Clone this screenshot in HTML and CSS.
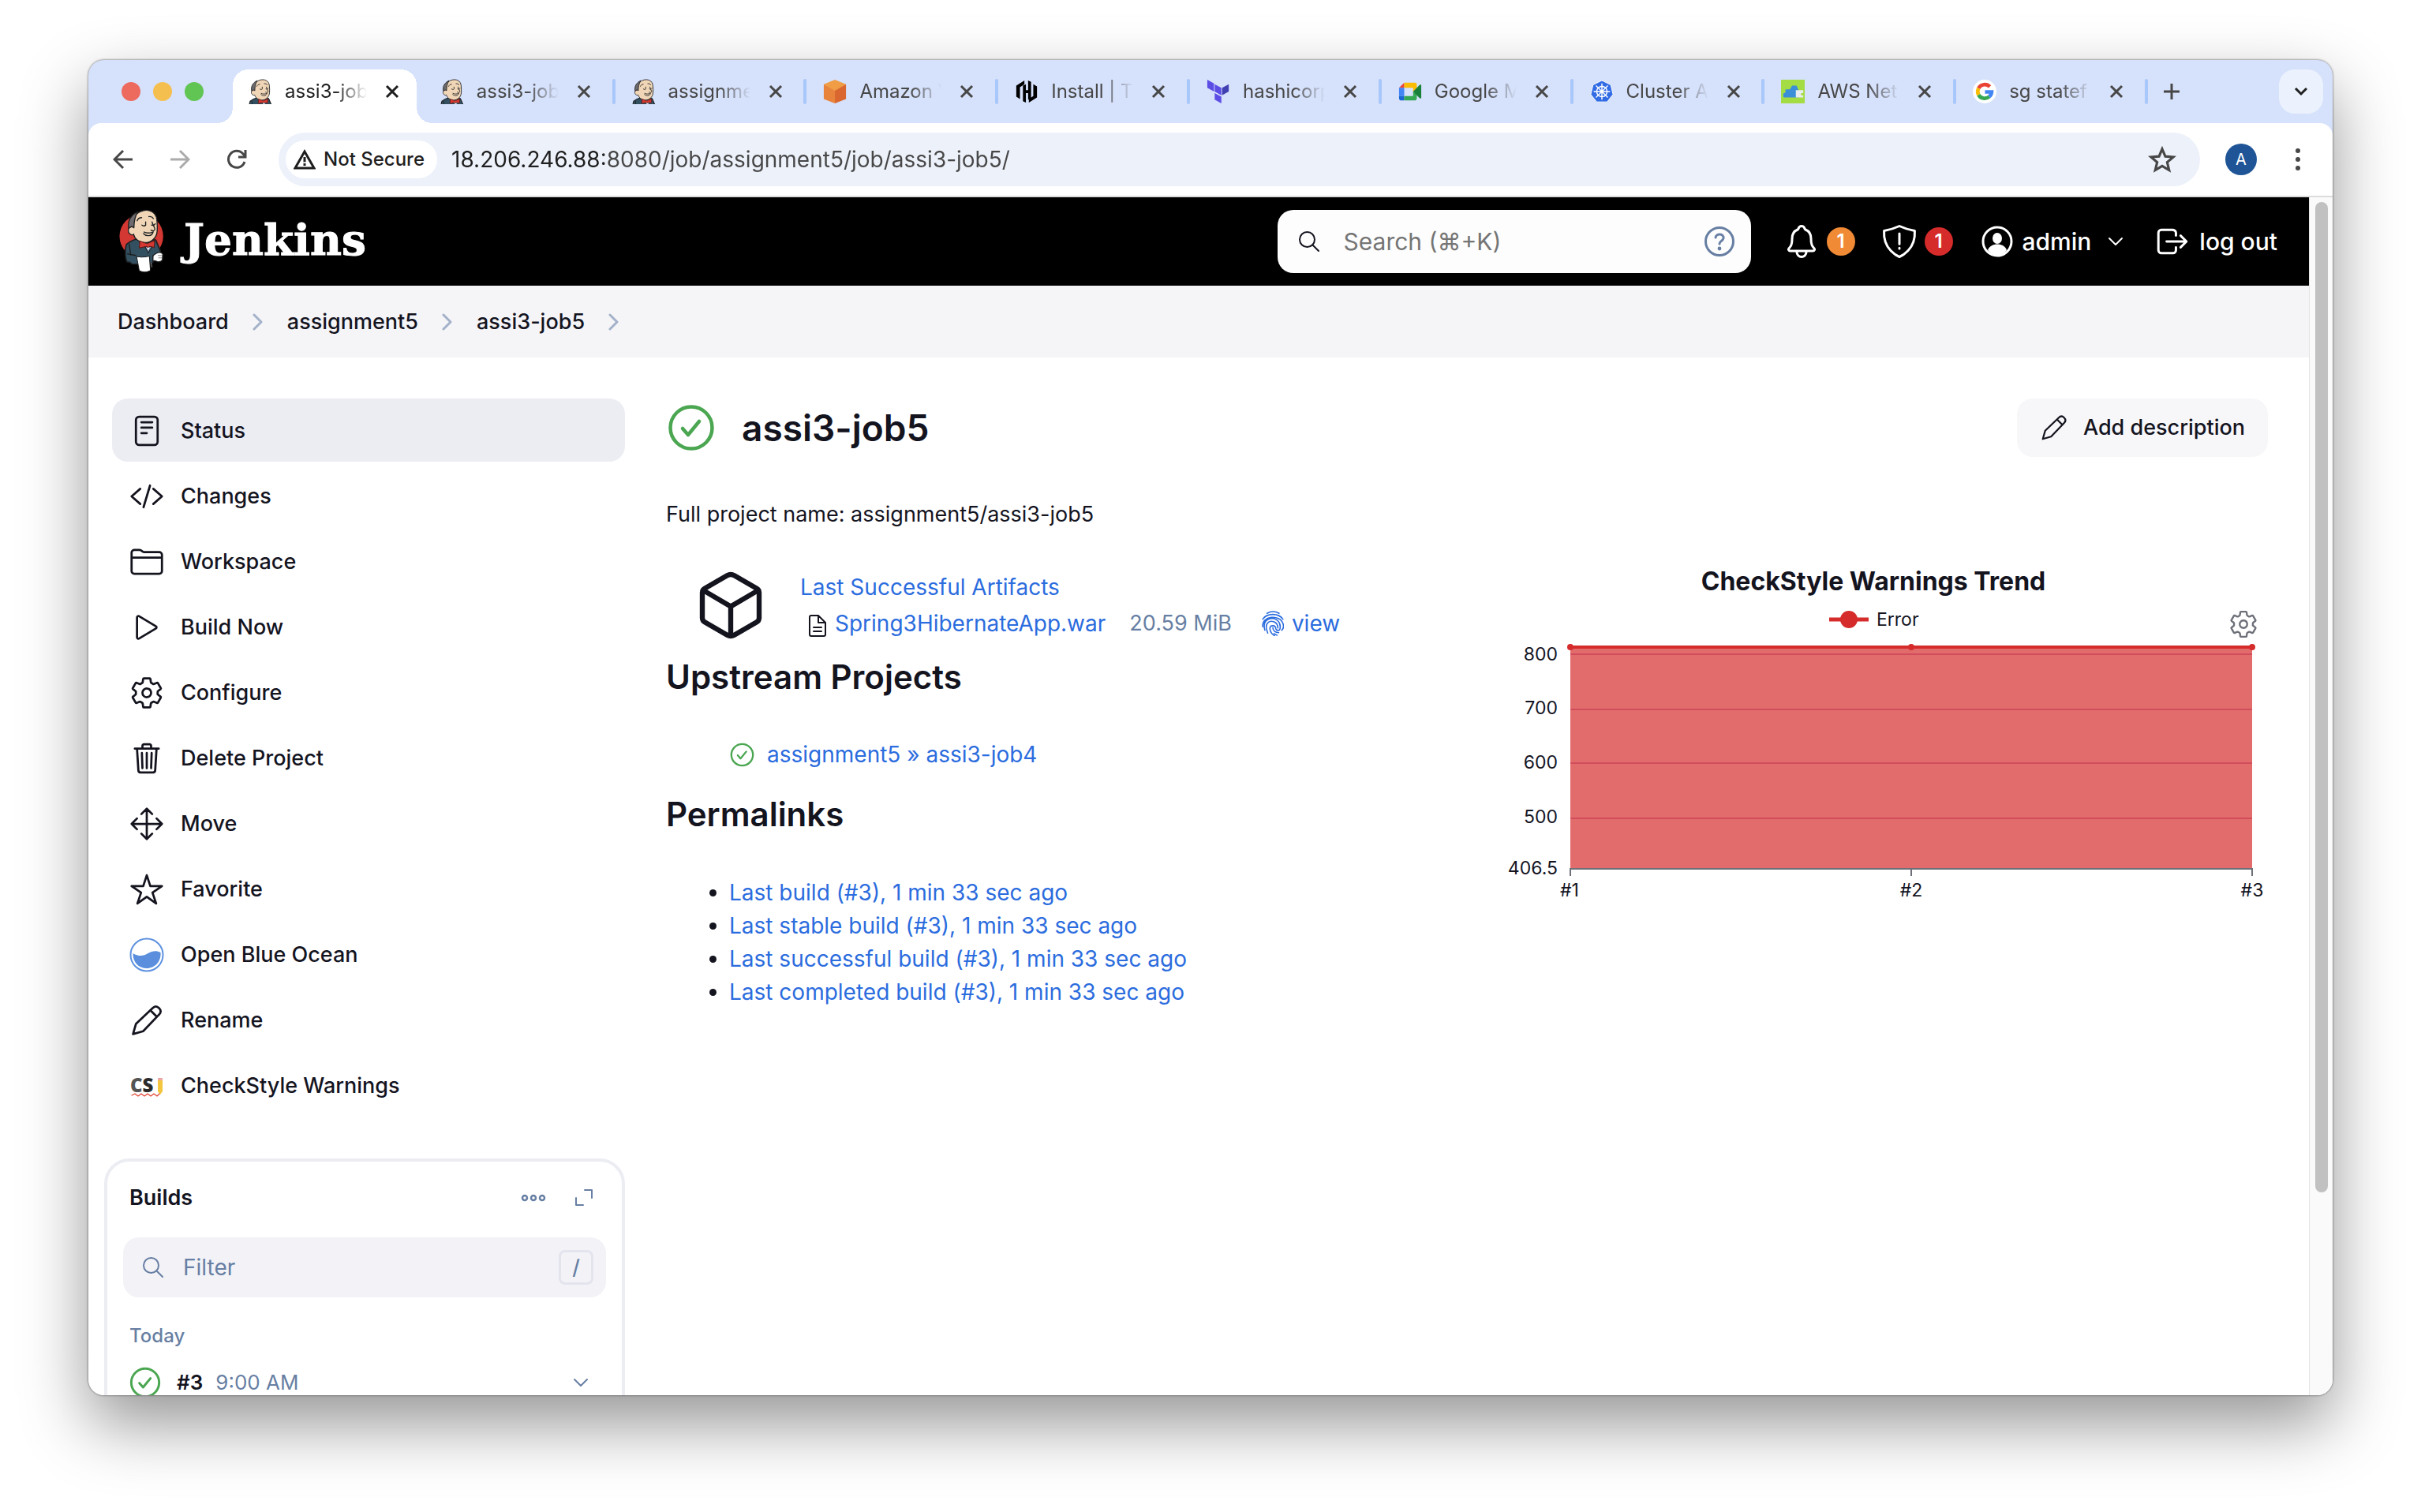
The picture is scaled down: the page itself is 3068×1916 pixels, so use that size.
FILE: index.html
```html
<!DOCTYPE html>
<html lang="en">
<head>
<meta charset="utf-8">
<title>assi3-job5 [Jenkins]</title>
<link rel="stylesheet" href="styles.css">
</head>
<body>
<svg class="defs" aria-hidden="true">
  <symbol id="butler" viewBox="0 0 200 270">
    <path d="M42 150c14-12 28-18 44-21l66 5 18 42-14 20-14-3v24l-14 8-66-1-6-6-12-2c-6-10-10-44-2-66z" fill="#335061" stroke="#1d1f20" stroke-width="5" stroke-linejoin="round"/>
    <path d="M104 144l20 38 22-38z" fill="#83a3bd" stroke="#1d1f20" stroke-width="3"/>
    <path d="M112 150l12 22 8-22z" fill="#fff"/>
    <path d="M62 84c-16-2-18 24-2 30 6 2 8 0 9-1 4 18 22 30 42 31 24 0 44-18 46-42 2-16 0-30-1-46-3-28-30-38-52-32-28 6-42 30-42 60z" fill="#f0d6b7" stroke="#1d1f20" stroke-width="4"/>
    <path d="M84 28c-22 10-40 32-33 62l10-7 9 5c0-22 2-38 14-60z" fill="#6d6b6d" stroke="#1d1f20" stroke-width="4" stroke-linejoin="round"/>
    <path d="M82 62c3-8 9-12 17-12M126 46c8-1 14 2 17 7M100 78c6 4 11 4 14 0v-12M136 78c5 2 10 1 14-5M138 66c2 12 14 24 10 30-3 4-9 4-14 1M108 104c10 6 22 4 34 0-4 18-28 16-36 6" fill="none" stroke="#1d1f20" stroke-width="4" stroke-linecap="round"/>
    <path d="M120 148l-28-10-2 26 28-6 4 4 8-4 16 4 2-26-22 9z" fill="#d33833" stroke="#5a1512" stroke-width="3" stroke-linejoin="round"/>
    <path d="M80 196c16 3 32 2 48-2l4 54c-12 8-30 8-42 1z" fill="#fff" stroke="#1d1f20" stroke-width="3"/>
    <path d="M142 192l12-8c10-6 20-4 24 3l-1 22c-6 8-18 9-24 4l-12-2z" fill="#fff" stroke="#1d1f20" stroke-width="4"/>
    <path d="M160 192h14M162 201h13M134 218l4 18" stroke="#8b8b8b" stroke-width="3"/>
    <path d="M44 186l34 6M52 148l6 44" stroke="#1d1f20" stroke-width="4"/>
  </symbol>
  <symbol id="x" viewBox="0 0 18 18"><path d="M2 2l14 14M16 2L2 16" stroke="currentColor" stroke-width="3" fill="none"/></symbol>
  <symbol id="down" viewBox="0 0 20 12"><path d="M2 2l8 8 8-8" stroke="currentColor" stroke-width="2" fill="none" stroke-linecap="round" stroke-linejoin="round"/></symbol>
  <symbol id="right" viewBox="0 0 14 24"><path d="M2 3l9 9-9 9" stroke="currentColor" stroke-width="3" fill="none" stroke-linecap="round" stroke-linejoin="round"/></symbol>
  <symbol id="ok" viewBox="0 0 60 60"><g fill="none" stroke="#4ba651" stroke-linecap="round" stroke-linejoin="round"><circle cx="30" cy="30" r="26.500" stroke-width="4.500"/><path d="M19 31l7 8 14-17" stroke-width="4.500"/></g></symbol>
  <symbol id="search" viewBox="0 0 28 28"><path d="M26 26l-8-8M21 11.500a9.500 9.500 0 1 1-19 0 9.500 9.500 0 0 1 19 0z" stroke="currentColor" stroke-width="2" fill="none" stroke-linecap="round"/></symbol>
  <symbol id="pencil" viewBox="0 0 48 48"><path d="M5 43l4-14L32 7c3-3 6-3 9 0s3 6 0 9L19 39zM29 10l9 9" stroke="currentColor" stroke-width="3" fill="none" stroke-linecap="round" stroke-linejoin="round"/></symbol>
  <symbol id="gear" viewBox="0 0 512 512"><path fill="none" stroke="currentColor" stroke-width="32" stroke-linejoin="round" d="M262.290 192.310a64 64 0 1057.400 57.400 64.130 64.130 0 00-57.400-57.400zM416.390 256a154.340 154.340 0 01-1.530 20.790l45.210 35.460a10.810 10.810 0 012.450 13.750l-42.770 74a10.810 10.810 0 01-13.140 4.590l-44.900-18.080a16.110 16.110 0 00-15.170 1.750A164.480 164.480 0 01325 400.800a15.940 15.940 0 00-8.820 12.140l-6.730 47.890a11.080 11.080 0 01-10.680 9.170h-85.540a11.110 11.110 0 01-10.690-8.870l-6.720-47.820a16.070 16.070 0 00-9-12.220 155.300 155.300 0 01-21.460-12.570 16 16 0 00-15.110-1.710l-44.890 18.070a10.810 10.810 0 01-13.140-4.580l-42.770-74a10.800 10.800 0 012.450-13.750l38.210-30a16.050 16.050 0 006-14.080c-.360-4.170-.580-8.330-.580-12.500s.210-8.270.580-12.350a16 16 0 00-6.070-13.940l-38.190-30A10.810 10.810 0 0149.480 186l42.770-74a10.810 10.810 0 0113.140-4.590l44.900 18.080a16.110 16.110 0 0015.170-1.750A164.480 164.480 0 01187 111.200a15.940 15.940 0 008.820-12.140l6.730-47.890A11.080 11.080 0 01213.230 42h85.540a11.110 11.110 0 0110.690 8.870l6.720 47.820a16.070 16.070 0 009 12.220 155.300 155.300 0 0121.460 12.570 16 16 0 0015.110 1.710l44.890-18.070a10.810 10.810 0 0113.140 4.580l42.770 74a10.800 10.800 0 01-2.450 13.750l-38.210 30a16.050 16.050 0 00-6.050 14.080c.330 4.140.550 8.300.550 12.470z"/></symbol>
</svg>

<div class="window">
  <div class="tabstrip">
    <div class="lights"><span class="light red"></span><span class="light amber"></span><span class="light green"></span></div>
    <div class="tabs">
      <div class="tab active"><svg class="fav" viewBox="33 18 140 150"><use href="#butler" width="200" height="270"/></svg><a href="#">assi3-job</a><button aria-label="Close tab"><svg><use href="#x"/></svg></button></div>
      <div class="tab"><svg class="fav" viewBox="33 18 140 150"><use href="#butler" width="200" height="270"/></svg><a href="#">assi3-job</a><button aria-label="Close tab"><svg><use href="#x"/></svg></button></div>
      <div class="tab"><svg class="fav" viewBox="33 18 140 150"><use href="#butler" width="200" height="270"/></svg><a href="#">assignme</a><button aria-label="Close tab"><svg><use href="#x"/></svg></button></div>
      <div class="tab"><svg class="fav" viewBox="0 0 32 32"><path d="M16 0l15 6-15 10L1 6z" fill="#f09d45"/><path d="M1 6l15 9v17L1 26z" fill="#e8833c"/><path d="M31 6l-15 9v17l15-6z" fill="#d9672f"/></svg><a href="#">Amazon V</a><button aria-label="Close tab"><svg><use href="#x"/></svg></button></div>
      <div class="tab"><svg class="fav" viewBox="0 0 32 32"><path d="M13 1v5L7 10v16l-5-3V8zM19 31v-5l6-4V6l5 3v15zM11 8l4-2v8h3V1l4 2v22l-4 2v-9h-3v13l-4-2z" fill="#000"/></svg><a href="#">Install | T</a><button aria-label="Close tab"><svg><use href="#x"/></svg></button></div>
      <div class="tab"><svg class="fav" viewBox="0 0 32 32"><path d="M1 0l9 5v11l-9-5zM11 6l9 5v10l-9-5zM11 18l9 5v9l-9-5z" fill="#5c4ee5"/><path d="M21 11l9-5v10l-9 5z" fill="#4040b2"/></svg><a href="#">hashicorp</a><button aria-label="Close tab"><svg><use href="#x"/></svg></button></div>
      <div class="tab"><svg class="fav" viewBox="0 0 32 32"><path d="M1 11h7V4z" fill="#ea4335"/><path d="M8 4h14a3 3 0 0 1 3 3v5l-5 4v-5H8z" fill="#fbbc04"/><path d="M1 11h7v11H1z" fill="#4285f4"/><path d="M1 22h7v6H4a3 3 0 0 1-3-3z" fill="#1967d2"/><path d="M8 22h12v-6l5 4v5a3 3 0 0 1-3 3H8z" fill="#34a853"/><path d="M20 16l9-9q2-1 2 1v16q0 2-2 1z" fill="#188038"/></svg><a href="#">Google M</a><button aria-label="Close tab"><svg><use href="#x"/></svg></button></div>
      <div class="tab"><svg class="fav" viewBox="0 0 32 32"><path d="M16 1l12 6 3 13-8 10H9L1 20 4 7z" fill="#326ce5" stroke="#fff" stroke-width="1"/><g fill="none" stroke="#fff" stroke-width="1.500"><circle cx="16" cy="16" r="7"/><path d="M16 5v22M5 16h22M8 8l16 16M24 8L8 24"/></g><circle cx="16" cy="16" r="2" fill="#fff"/></svg><a href="#">Cluster A</a><button aria-label="Close tab"><svg><use href="#x"/></svg></button></div>
      <div class="tab"><svg class="fav" viewBox="0 0 32 32"><path d="M0 0h32v32H0z" fill="#a4dc43"/><path d="M3 23v-4l3-2v-4h6l3-5h6l3 7v9H4z" fill="#3b8ed8"/><path d="M20 14h10v4h-3v3h3v3H20z" fill="#e8ecee"/></svg><a href="#">AWS Net</a><button aria-label="Close tab"><svg><use href="#x"/></svg></button></div>
      <div class="tab"><svg class="fav" viewBox="0 0 32 32"><circle cx="16" cy="16" r="16" fill="#fff"/><g fill="none" stroke-width="5"><path d="M23 9.500A9.500 9.500 0 0 0 7.800 11.500" stroke="#ea4335"/><path d="M7.800 11.500a9.500 9.500 0 0 0 0 9" stroke="#fbbc05"/><path d="M7.800 20.500A9.500 9.500 0 0 0 22.200 23" stroke="#34a853"/><path d="M16.500 16.500h9a9.500 9.500 0 0 1-3.300 6.500" stroke="#4285f4"/></g></svg><a href="#">sg statef</a><button aria-label="Close tab"><svg><use href="#x"/></svg></button></div>
    </div>
    <button class="newtab" aria-label="New tab"><svg viewBox="0 0 22 22"><path d="M11 1v20M1 11h20" stroke="currentColor" stroke-width="3"/></svg></button>
    <button class="tablist" aria-label="Search tabs"><svg viewBox="0 0 20 12"><path d="M3 2l7 7 7-7" stroke="currentColor" stroke-width="3" fill="none"/></svg></button>
  </div>

  <div class="toolbar">
    <button class="nav" aria-label="Back"><svg viewBox="0 0 26 26"><path d="M25 13H3M13 2L2 13l11 11" stroke="currentColor" stroke-width="3" fill="none"/></svg></button>
    <button class="nav off" aria-label="Forward"><svg viewBox="0 0 26 26"><path d="M1 13h22M13 2l11 11-11 11" stroke="currentColor" stroke-width="3" fill="none"/></svg></button>
    <button class="nav" aria-label="Reload"><svg viewBox="0 0 26 26"><path d="M23 16A10.500 10.500 0 1 1 21 6l3 3M24 1v9h-9" stroke="currentColor" stroke-width="3" fill="none"/></svg></button>
    <div class="omnibox">
      <button class="chip"><svg viewBox="0 0 28 26"><path d="M14 3L2 24h24z" stroke="currentColor" stroke-width="3" fill="none"/><path d="M14 10v7M14 18v3" stroke="currentColor" stroke-width="3"/><path d="M12.500 17h3" stroke="#fff" stroke-width="1.500"/></svg>Not Secure</button>
      <input class="url" type="text" aria-label="Address" value="18.206.246.88:8080/job/assignment5/job/assi3-job5/">
      <button class="fave" aria-label="Bookmark"><svg viewBox="0 0 30 30"><path d="M15 4l3.300 7.800 8.500.700-6.500 5.500 2 8.300L15 22l-7.300 4.300 2-8.300-6.500-5.500 8.500-.700z" stroke="currentColor" stroke-width="2.600" fill="none"/></svg></button>
    </div>
    <button class="avatar">A</button>
    <button class="kebab" aria-label="Menu"><svg viewBox="0 0 6 30"><circle cx="3" cy="4" r="3"/><circle cx="3" cy="15" r="3"/><circle cx="3" cy="26" r="3"/></svg></button>
  </div>

  <div class="viewport">
    <div class="page">
      <header class="top">
        <a class="brand" href="#"><svg viewBox="12 18 174 243"><circle cx="98" cy="120" r="82" fill="#d33833"/><use href="#butler" width="200" height="270"/></svg>Jenkins</a>
        <div class="find">
          <svg class="glass"><use href="#search"/></svg>
          <input type="search" aria-label="Search" placeholder="Search (⌘+K)">
          <a href="#" aria-label="Help"><svg viewBox="0 0 40 40"><g fill="none" stroke="currentColor" stroke-width="3" stroke-linecap="round" stroke-linejoin="round"><circle cx="20" cy="20" r="17.500"/><path d="M15 15c1-6 11-5 10 1-1 4-5 3-5 7"/></g><circle cx="20" cy="29" r="2.400" fill="currentColor"/></svg></a>
        </div>
        <a class="alert" href="#"><svg class="line" viewBox="0 0 512 512"><path d="M427.680 351.430C402 320 383.870 304 383.870 217.350 383.870 138 343.350 109.730 310 96c-4.430-1.820-8.600-6-9.950-10.550C294.200 65.540 277.800 48 256 48s-38.210 17.550-44 37.470c-1.350 4.600-5.520 8.710-9.950 10.530-33.390 13.750-73.870 41.920-73.870 121.350C128.130 304 110 320 84.320 351.430 73.680 364.450 83 384 101.610 384h308.880c18.510 0 27.770-19.610 17.190-32.570zM320 384v16a64 64 0 01-128 0v-16"/></svg><span class="badge warn">1</span></a>
        <a class="alert" href="#"><svg class="line" viewBox="0 0 512 512"><path d="M463.100 112.370C373.680 96.330 336.710 84.450 256 48c-80.710 36.450-117.680 48.330-207.100 64.370C32.700 369.130 240.580 457.790 256 464c15.420-6.210 223.300-94.870 207.100-351.630zM256 150v140M256 345v6"/></svg><span class="badge bad">1</span></a>
        <a class="user" href="#"><svg viewBox="0 0 40 40"><circle cx="20" cy="20" r="18" fill="none" stroke="#fff" stroke-width="3"/><ellipse cx="20" cy="16" rx="6" ry="7" fill="#fff"/><path d="M8 31c3-10 21-10 24 0-6 9-18 9-24 0z" fill="#fff"/></svg>admin<svg class="caret"><use href="#down"/></svg></a>
        <a class="logout" href="#"><svg class="line" viewBox="40 76 432 360"><path d="M304 336v40a40 40 0 01-40 40H104a40 40 0 01-40-40V136a40 40 0 0140-40h152c22.090 0 48 17.910 48 40v40M368 336l80-80-80-80M176 256h256"/></svg>log out</a>
      </header>
      <nav class="crumbs" aria-label="Breadcrumb">
        <a href="#">Dashboard</a><svg><use href="#right"/></svg><a href="#">assignment5</a><svg><use href="#right"/></svg><a href="#">assi3-job5</a><svg><use href="#right"/></svg>
      </nav>

      <div class="content">
        <aside class="side">
          <nav class="tasks">
            <a class="current" href="#"><svg viewBox="0 0 512 512"><rect x="96" y="48" width="320" height="416" rx="48"/><path d="M176 128h160M176 208h160M176 288h80"/></svg>Status</a>
            <a href="#"><svg viewBox="0 0 512 512"><path d="M160 368L32 256l128-112M352 368l128-112-128-112M304 96l-96 320"/></svg>Changes</a>
            <a href="#"><svg viewBox="0 0 512 512"><path d="M440 432H72a40 40 0 01-40-40V120a40 40 0 0140-40h75.890a40 40 0 0122.190 6.720l27.840 18.560a40 40 0 0022.190 6.720H440a40 40 0 0140 40v240a40 40 0 01-40 40zM32 192h448"/></svg>Workspace</a>
            <a href="#"><svg viewBox="0 0 512 512"><path d="M112 111v290c0 17.440 17 28.520 31 20.160l247.900-148.370c12.120-7.250 12.120-26.330 0-33.580L143 90.840c-14-8.360-31 2.720-31 20.160z"/></svg>Build Now</a>
            <a href="#"><svg><use href="#gear"/></svg>Configure</a>
            <a href="#"><svg viewBox="0 0 512 512"><path d="M112 112l20 320c.950 18.490 14.400 32 32 32h184c17.670 0 30.870-13.510 32-32l20-320M80 112h352M192 112V72a23.930 23.930 0 0124-24h80a23.930 23.930 0 0124 24v40M256 176v224M184 176l8 224M328 176l-8 224"/></svg>Delete Project</a>
            <a href="#"><svg viewBox="0 0 512 512"><path d="M176 112l80-80 80 80M256 32v448M176 400l80 80 80-80M400 176l80 80-80 80M112 176l-80 80 80 80M32 256h448"/></svg>Move</a>
            <a href="#"><svg viewBox="0 0 512 512"><path d="M480 208H308L256 48l-52 160H32l140 96-54 160 138-100 138 100-54-160z"/></svg>Favorite</a>
            <a href="#"><svg viewBox="0 0 44 44"><circle cx="22" cy="22" r="20.500" fill="#fff" stroke="#5e92e0" stroke-width="2"/><path d="M4.500 20c8 5 14 3 19 0s11-4 16-1c1 11-7 20-17.500 20S4 31 4.500 20z" fill="#5b8fde"/></svg>Open Blue Ocean</a>
            <a href="#"><svg><use href="#pencil"/></svg>Rename</a>
            <a href="#"><svg viewBox="0 0 44 44"><text x="1" y="30" class="csi" fill="#555">C<tspan fill="#2b2b2b">S</tspan></text><path d="M36 15h6v14l-3 4-3-4z" fill="#f3c63d"/><path d="M36 12h6v3h-6z" fill="#efa6a6"/><path d="M3 34l4-2 4 3 4-3 4 3 4-3 4 3 4-3 4 3 3-3" fill="none" stroke="#e0412f" stroke-width="1.200"/></svg>CheckStyle Warnings</a>
          </nav>
          <section class="builds">
            <div class="bhead"><h2>Builds</h2><button aria-label="More"><svg viewBox="0 0 32 12" class="dots"><g fill="none" stroke="currentColor" stroke-width="2.500"><circle cx="5" cy="6" r="3"/><circle cx="16" cy="6" r="3"/><circle cx="27" cy="6" r="3"/></g></svg></button><button aria-label="Expand"><svg viewBox="0 0 24 24" class="expand"><path d="M13 2h9v10M2 12v9h9" fill="none" stroke="currentColor" stroke-width="2" stroke-linecap="round" stroke-linejoin="round"/></svg></button></div>
            <label class="filter"><svg><use href="#search"/></svg><input type="text" placeholder="Filter" aria-label="Filter builds"><kbd>/</kbd></label>
            <h3>Today</h3>
            <a class="build" href="#"><svg class="state"><use href="#ok"/></svg><b>#3</b><span>9:00 AM</span><svg class="caret"><use href="#down"/></svg></a>
          </section>
        </aside>

        <main class="main">
          <div class="title">
            <svg><use href="#ok"/></svg><h1>assi3-job5</h1>
            <button class="describe"><svg><use href="#pencil"/></svg>Add description</button>
          </div>
          <div class="body">
            <div class="info">
              <p>Full project name: assignment5/assi3-job5</p>
              <div class="artifacts">
                <svg class="cube" viewBox="0 0 512 512"><path d="M448 341.370V170.610A32 32 0 00432.110 143l-152-88.460a47.940 47.940 0 00-48.240 0L79.890 143A32 32 0 0064 170.610v170.760A32 32 0 0079.890 369l152 88.460a48 48 0 0048.240 0l152-88.460A32 32 0 00448 341.370zM69 154l187 110 187-110M256 464V264"/></svg>
                <div>
                  <a href="#">Last Successful Artifacts</a>
                  <div class="file">
                    <svg class="doc" viewBox="0 0 24 30"><path d="M4 2h9l9 9v15a2 2 0 0 1-2 2H4a2 2 0 0 1-2-2V4a2 2 0 0 1 2-2zM13 2v9h9M7 17h10M7 22h10"/></svg>
                    <a href="#">Spring3HibernateApp.war</a><span class="size">20.59 MiB</span>
                    <a class="print" href="#"><svg viewBox="0 0 52 60"><path d="M12 6c9-5 20-5 29 0M2 20C12 5 40 5 50 20M2 38C-1 11 43 8 50 30c2 6 1 13-3 16M7 46c-8-28 20-34 31-22 6 6 6 14 5 19-1 5-9 5-10-1-1-9-14-9-14 1 1 8 5 13 11 16M14 53C4 30 17 22 28 26c8 3 10 9 10 15M26 40c0 8 7 12 14 12M36 58c-3-1-5-2-7-4"/></svg>view</a>
                  </div>
                </div>
              </div>
              <h2>Upstream Projects</h2>
              <ul class="upstream"><li><svg><use href="#ok"/></svg><a href="#">assignment5 » assi3-job4</a></li></ul>
              <h2>Permalinks</h2>
              <ul class="perma">
                <li><a href="#">Last build (#3), 1 min 33 sec ago</a></li>
                <li><a href="#">Last stable build (#3), 1 min 33 sec ago</a></li>
                <li><a href="#">Last successful build (#3), 1 min 33 sec ago</a></li>
                <li><a href="#">Last completed build (#3), 1 min 33 sec ago</a></li>
              </ul>
            </div>
            <figure class="trend">
              <figcaption>CheckStyle Warnings Trend</figcaption>
              <button aria-label="Configure chart"><svg><use href="#gear"/></svg></button>
              <svg class="chart" viewBox="0 0 1000 400">
                <path d="M444 24h50" stroke="#d52b2b" stroke-width="5"/><circle cx="469" cy="24" r="11" fill="#d52b2b"/><text x="504" y="32">Error</text>
                <path d="M116 59h864v280H116z" fill="#e26b6b"/>
                <path d="M116 68h864M116 138h864M116 206h864M116 276h864" stroke="#d24d5c" stroke-width="2"/>
                <path d="M116 59h864" stroke="#d52b2b" stroke-width="4"/>
                <g fill="#d52b2b"><circle cx="116" cy="59" r="4"/><circle cx="548" cy="59" r="4"/><circle cx="980" cy="59" r="4"/></g>
                <path d="M115 340h866M116 340v9M548 340v9M980 340v9" stroke="#6e7079" stroke-width="2"/>
                <g text-anchor="end"><text x="100" y="76">800</text><text x="100" y="144">700</text><text x="100" y="213">600</text><text x="100" y="282">500</text><text x="100" y="347">406.5</text></g>
                <g text-anchor="middle"><text x="115" y="375">#1</text><text x="548" y="375">#2</text><text x="980" y="375">#3</text></g>
              </svg>
            </figure>
          </div>
        </main>
      </div>
    </div>
    <div class="scroll"><span></span></div>
  </div>
</div>
</body>
</html>
```
FILE: styles.css
```css
* { box-sizing: border-box; }
body {
  margin: 0;
  height: 100vh;
  padding: 76px 112px 148px;
  display: flex;
  background: #fff;
  color: #14141f;
  font: 28px/42px Inter, "Liberation Sans", sans-serif;
}
button, input { font: inherit; color: inherit; border: 0; background: none; padding: 0; margin: 0; min-width: 0; }
a { color: inherit; text-decoration: none; }
h1, h2, h3, p, ul, figure { margin: 0; padding: 0; }
svg { display: block; flex: none; }
.defs { position: absolute; width: 0; height: 0; }

.window {
  flex: 1;
  min-width: 0;
  display: flex;
  flex-direction: column;
  overflow: hidden;
  border-radius: 20px;
  background: #d6e1fb;
  box-shadow: 0 0 2px 1px rgba(0, 0, 0, .3), 0 36px 84px rgba(0, 0, 0, .42);
}

/* Tab strip */
.tabstrip { flex: none; height: 80px; display: flex; align-items: center; padding: 0 12px 0 42px; color: #474747; }
.lights { display: flex; gap: 16px; margin-right: 36px; }
.light { width: 24px; height: 24px; border-radius: 50%; }
.red { background: #ed6a5f; }
.amber { background: #f5bf4f; }
.green { background: #61c554; }
.tabs { flex: 0 1 2428px; align-self: stretch; display: flex; min-width: 0; }
.tab { flex: 1 1 0; min-width: 0; display: flex; align-items: center; padding-left: 21px; font-size: 24px; line-height: 32px; position: relative; }
.tab::after { content: ""; width: 4px; height: 32px; margin-left: auto; border-radius: 2px; background: #a8c7fa; }
.fav { width: 30px; height: 32px; margin-right: 16px; }
.tab a { flex: none; width: 104px; white-space: nowrap; -webkit-mask-image: linear-gradient(90deg, #000 62%, transparent); mask-image: linear-gradient(90deg, #000 62%, transparent); }
.tab button { width: 36px; height: 36px; margin-left: 14px; display: grid; place-items: center; }
.tab button svg { width: 18px; height: 18px; }
.active { color: #1f1f1f; z-index: 0; }
.active::after { visibility: hidden; }
.active::before {
  content: "";
  position: absolute;
  z-index: -1;
  inset: 12px -11px 0 -19px;
  background:
    radial-gradient(circle at 0 0, transparent 20px, #fff 20px) left bottom / 20px 20px no-repeat,
    radial-gradient(circle at 100% 0, transparent 20px, #fff 20px) right bottom / 20px 20px no-repeat,
    radial-gradient(circle at 20px 20px, #fff 20px, transparent 20px) 20px 0 / 20px 20px no-repeat,
    radial-gradient(circle at 0 20px, #fff 20px, transparent 20px) calc(100% - 20px) 0 / 20px 20px no-repeat,
    linear-gradient(#fff, #fff) 50% 0 / calc(100% - 80px) 100% no-repeat,
    linear-gradient(#fff, #fff) 50% 100% / calc(100% - 40px) calc(100% - 20px) no-repeat;
}
.newtab { width: 56px; height: 56px; margin-left: 2px; display: grid; place-items: center; }
.newtab svg { width: 22px; height: 22px; }
.tablist { width: 56px; height: 56px; margin-left: auto; border-radius: 20px; background: #ebf2fd; color: #1f1f1f; display: grid; place-items: center; }
.tablist svg { width: 20px; height: 12px; }

/* Toolbar */
.toolbar { flex: none; height: 94px; padding: 0 41px 0 8px; border-bottom: 2px solid #dcdcdc; border-radius: 16px 16px 0 0; background: #fff; display: flex; align-items: center; color: #474747; }
.nav { width: 72px; height: 56px; display: grid; place-items: center; }
.nav svg { width: 26px; height: 26px; }
.off { color: #ababab; }
.omnibox { flex: 1; min-width: 0; height: 68px; margin-left: 17px; padding: 0 30px 0 9px; border-radius: 34px; background: #edf1fa; display: flex; align-items: center; }
.chip { height: 48px; padding: 0 16px 0 10px; border-radius: 24px; background: #fff; color: #1f1f1f; font-size: 24px; font-weight: 500; display: flex; align-items: center; gap: 10px; white-space: nowrap; }
.chip svg { width: 28px; height: 26px; }
.url { flex: 1; height: 48px; margin-left: 18px; color: transparent; background: linear-gradient(90deg, #1f1f1f 194px, #474747 194px); -webkit-background-clip: text; background-clip: text; }
.fave svg { width: 36px; height: 36px; }
.avatar { width: 40px; height: 40px; margin-left: 32px; border-radius: 50%; background: #1f5597; color: #fff; font-size: 20px; line-height: 40px; text-align: center; }
.kebab { margin-left: 49px; }
.kebab svg { width: 6px; height: 30px; fill: #474747; }

/* Page */
.viewport { flex: 1; min-height: 0; display: flex; background: #fff; }
.page { flex: 1; min-width: 0; overflow: hidden; }
.scroll { width: 30px; padding: 6px 6px 0 7px; border-left: 1px solid #e4e4e4; background: #fafafa; }
.scroll span { display: block; width: 16px; height: 83%; border-radius: 8px; background: #c1c1c1; }

.top { height: 112px; padding: 0 40px 0 38px; background: #000; color: #fff; display: flex; align-items: center; font-size: 30px; font-weight: 500; }
.brand { display: flex; align-items: center; gap: 24px; margin-right: auto; font: bold 55px/76px "DejaVu Serif", serif; -webkit-text-stroke: 1px #fff; padding-bottom: 4px; }
.brand svg { width: 59px; height: 82px; margin-top: 4px; }
.find { width: 600px; height: 80px; padding: 0 20px 0 26px; border-radius: 20px; background: #fdfdfd; display: flex; align-items: center; color: #14141f; }
.find .glass { width: 28px; height: 28px; margin-right: 30px; }
.find input { flex: 1; height: 60px; font-weight: 400; }
.find input::placeholder { color: #757575; opacity: 1; }
.find a { color: #677fa3; }
.find a svg { width: 40px; height: 40px; }
.line { fill: none; stroke: #fff; stroke-width: 32; stroke-linecap: round; stroke-linejoin: round; }
.alert { display: flex; align-items: center; gap: 8px; }
.find + .alert { margin-left: 40px; }
.alert + .alert { margin-left: 32px; }
.alert svg { width: 48px; height: 48px; }
.badge { width: 36px; height: 36px; border-radius: 50%; font-size: 24px; font-weight: 600; line-height: 36px; text-align: center; }
.warn { background: #f08a34; }
.bad { background: #d52b2b; }
.user { display: flex; align-items: center; gap: 12px; margin-left: 36px; }
.user svg { width: 40px; height: 40px; }
.user .caret { width: 20px; height: 12px; margin-left: 9px; }
.logout { display: flex; align-items: center; gap: 14px; margin-left: 42px; }
.logout svg { width: 40px; height: 34px; }

.crumbs { height: 91px; padding-left: 37px; background: #f5f5f8; display: flex; align-items: center; gap: 30px; font-size: 27px; font-weight: 500; }
.crumbs svg { width: 14px; height: 24px; color: #a3b1c9; }

.content { display: flex; gap: 52px; padding: 52px 52px 0 20px; }
.side { flex: none; width: 660px; }
.tasks { padding-left: 10px; display: flex; flex-direction: column; gap: 3px; font-size: 27px; font-weight: 500; }
.tasks a { height: 80px; padding: 2px 0 0 22px; border-radius: 20px; display: flex; align-items: center; gap: 21px; }
.tasks .current { background: #ecedf3; }
.tasks svg { width: 44px; height: 44px; fill: none; stroke: currentColor; stroke-width: 32; stroke-linecap: round; stroke-linejoin: round; }
.tasks svg[viewBox="0 0 44 44"], .tasks svg:has(use) { stroke: none; stroke-width: 0; }
.csi { font: 800 24px "Open Sans", sans-serif; }

.builds { margin-top: 53px; padding: 20px 20px 40px; border: 4px solid #ecedf3; border-radius: 32px; color: #677fa3; }
.bhead { display: flex; align-items: center; height: 52px; padding: 0 16px 0 8px; }
.bhead h2 { margin-right: auto; font-size: 27px; font-weight: 600; line-height: 42px; color: #14141f; }
.bhead button + button { margin-left: 36px; }
.dots { width: 32px; height: 12px; }
.expand { width: 24px; height: 24px; }
.filter { height: 76px; margin-top: 24px; padding: 0 16px 0 24px; border-radius: 20px; background: #f2f2f7; display: flex; align-items: center; }
.filter svg { width: 28px; height: 28px; margin-right: 24px; }
.filter input { flex: 1; height: 48px; }
.filter input::placeholder { color: #677fa3; opacity: 1; }
.filter kbd { width: 44px; height: 44px; border: 3px solid #e4e4ee; border-radius: 8px; font: 500 26px/38px Inter, sans-serif; text-align: center; }
.builds h3 { margin: 28px 0 0 8px; font-size: 24px; font-weight: 500; line-height: 42px; }
.build { display: flex; align-items: center; height: 60px; margin-top: 8px; padding: 0 22px 0 8px; font-size: 26px; }
.build .state { width: 40px; height: 40px; margin-right: 20px; }
.build b { font-weight: 600; color: #14141f; margin-right: 16px; }
.build .caret { width: 20px; height: 12px; margin-left: auto; }

.main { flex: 1; min-width: 0; }
.main a { color: #2b6cde; }
.title { display: flex; align-items: center; height: 74px; padding-left: 2px; }
.title svg { width: 60px; height: 60px; }
.title h1 { margin: 0 auto 0 34px; font-size: 46px; font-weight: 600; line-height: 60px; }
.describe { height: 74px; padding: 0 29px; border-radius: 20px; background: #f7f7fa; font-size: 27px; font-weight: 500; display: flex; align-items: center; gap: 19px; white-space: nowrap; }
.title .describe svg { width: 36px; height: 36px; }
.body { display: flex; }
.info { flex: 1; min-width: 0; padding-top: 52px; white-space: nowrap; }
.info p { font-size: 27px; }
.artifacts { display: flex; align-items: center; gap: 40px; margin-top: 46px; padding-left: 34px; line-height: 46px; }
.artifacts svg { fill: none; stroke: currentColor; stroke-linecap: round; stroke-linejoin: round; }
.cube { width: 96px; height: 96px; stroke-width: 34; }
.file { display: flex; align-items: center; }
.doc { width: 24px; height: 30px; margin: 6px 10px 0; stroke-width: 2; }
.size { margin: 0 38px 0 30px; font-size: 27px; color: #677fa3; }
.print { display: flex; align-items: center; gap: 10px; }
.print svg { width: 28px; height: 32px; stroke-width: 3; }
.info h2 { font-size: 42px; font-weight: 600; line-height: 54px; margin-top: 16px; }
.upstream { margin: 50px 0 28px; padding-left: 81px; list-style: none; }
.upstream li { display: flex; align-items: center; gap: 16px; }
.upstream svg { width: 31px; height: 31px; }
.info .upstream + h2 { margin-top: 0; }
.perma { margin-top: 51px; padding-left: 80px; }

.trend { flex: none; width: 1000px; padding-top: 134px; position: relative; }
.trend figcaption { font-size: 32px; font-weight: 700; line-height: 48px; text-align: center; }
.trend button { position: absolute; right: 12px; top: 193px; color: #6e7079; }
.trend button svg { width: 38px; height: 38px; }
.chart { width: 100%; }
.chart text { font: 23px Inter, sans-serif; fill: #14141f; }
```
